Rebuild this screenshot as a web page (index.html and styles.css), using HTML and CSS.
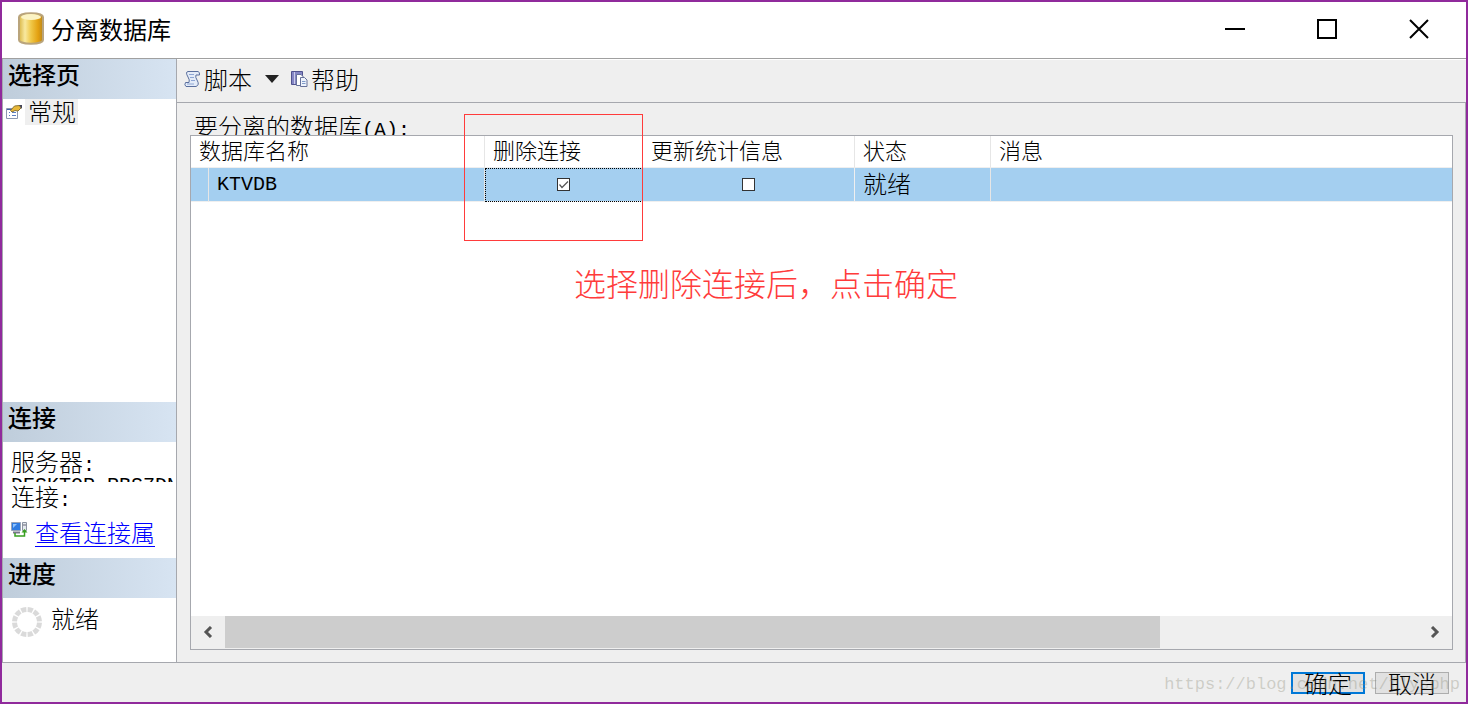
FILE: index.html
```html
<!DOCTYPE html>
<html lang="zh-CN">
<head>
<meta charset="utf-8">
<title>分离数据库</title>
<link rel="stylesheet" href="styles.css">
</head>
<body>
<div class="window">
  <header class="titlebar">
    <svg class="db-icon" width="28" height="34" viewBox="0 0 28 34" aria-hidden="true">
      <defs>
        <linearGradient id="gold" x1="0" x2="1"><stop offset="0" stop-color="#d9b544"/><stop offset=".25" stop-color="#f8e9a0"/><stop offset=".5" stop-color="#f0c848"/><stop offset=".8" stop-color="#e3a010"/><stop offset="1" stop-color="#b9861c"/></linearGradient>
      </defs>
      <path d="M2 5C2 0 26 0 26 5V28C26 33 2 33 2 28Z" fill="url(#gold)" stroke="#b9a47c" stroke-width="2"/>
      <ellipse cx="14" cy="5" rx="10" ry="3" fill="#fbf3c4"/>
    </svg>
    <h1 class="title">分离数据库</h1>
    <div class="controls">
      <button class="control" aria-label="最小化"><svg width="22" height="22" viewBox="0 0 22 22"><path d="M1 11H21" stroke="#000" stroke-width="2"/></svg></button>
      <button class="control" aria-label="最大化"><svg width="22" height="22" viewBox="0 0 22 22"><path d="M2 2H20V20H2Z" fill="none" stroke="#000" stroke-width="2"/></svg></button>
      <button class="control" aria-label="关闭"><svg width="22" height="22" viewBox="0 0 22 22"><path d="M2 2L20 20M20 2L2 20" stroke="#000" stroke-width="2"/></svg></button>
    </div>
  </header>

  <div class="body">
    <aside class="sidebar">
      <section class="pages">
        <h2 class="section-title">选择页</h2>
        <div class="page-item">
          <svg width="17" height="16" viewBox="0 0 17 16" aria-hidden="true">
            <path d="M.5 4.500H11.500V14.500H.5Z" fill="#fff" stroke="#8c98b0"/>
            <path d="M1 5.500H7" stroke="#3f62a8"/>
            <path d="M3 8.500H4M6 8.500H10M3 11.500H4M6 11.500H10" stroke="#5b7fc4"/>
            <path d="M4.500 6.500L8.500 2L13.500 1.500L15 4L12 7L9 6.500L6 8Z" fill="#e8b838" stroke="#8a7434"/>
            <path d="M13 1H16V5Z" fill="#445"/>
          </svg>
          <span class="page-name">常规</span>
        </div>
      </section>
      <section>
        <h2 class="section-title">连接</h2>
        <div class="connection">
          <div class="line">服务器<span class="latin">:</span></div>
          <div class="server latin">DESKTOP-RBS7DN</div>
          <div class="line">连接<span class="latin">:</span></div>
          <div class="view-link">
            <svg width="17" height="17" viewBox="0 0 17 17" aria-hidden="true">
              <path d="M.5 1.500H9.500V9.500H.5Z" fill="#2f7be0" stroke="#98a4b8"/>
              <path d="M2 3H6L2 7Z" fill="#8fc4ff"/>
              <path d="M2 11.500H9" stroke="#778" stroke-width="2"/>
              <path d="M11.500 1.500H15.500V9.500H11.500Z" fill="#e4e8ee" stroke="#8c94a2"/>
              <path d="M12 4H15" stroke="#667"/>
              <path d="M4 12V15H13.500V10" fill="none" stroke="#38a020" stroke-width="1.500"/>
              <path d="M10.500 11.500L13.500 8L16.500 11.500Z" fill="#38a020"/>
            </svg>
            <a class="link" href="#">查看连接属</a>
          </div>
        </div>
      </section>
      <section>
        <h2 class="section-title">进度</h2>
        <div class="progress">
          <svg width="32" height="32" viewBox="0 0 32 32" aria-hidden="true"><circle cx="16" cy="16" r="12.500" fill="none" stroke="#dadada" stroke-width="5" pathLength="120" stroke-dasharray="8 2" stroke-dashoffset="-1"/></svg>
          <span>就绪</span>
        </div>
      </section>
    </aside>

    <main class="main">
      <div class="toolbar">
        <button class="tool">
          <svg width="17" height="18" viewBox="0 0 17 18" aria-hidden="true">
            <path d="M4 1.500H14Q16 2 15.500 5H12Q11 7 13 10Q16 15 12 16.500H2Q0 15 1.500 12.500H5Q6 10 4 7Q1 2 4 1.500Z" fill="#e3ebf8" stroke="#5a6f9e"/>
            <path d="M5 4.500H10M6 7.500H10M7 10.500H11M3 14H10" stroke="#8ea6d4"/>
          </svg>
          <span>脚本</span>
          <svg class="caret" width="14" height="8" viewBox="0 0 14 8" aria-hidden="true"><path d="M0 0H14L7 8Z" fill="#222"/></svg>
        </button>
        <button class="tool">
          <svg width="17" height="18" viewBox="0 0 17 18" aria-hidden="true">
            <path d="M.5 1.500H11.500V14.500H.5Z" fill="#8486c4" stroke="#50528e"/>
            <path d="M3.500 2V14" stroke="#cccdea"/>
            <path d="M5.500 4.500H10L12.500 7V15.500H5.500Z" fill="#fff" stroke="#667199"/>
            <path d="M9.500 7.500H13.500L16 10V16.500H9.500Z" fill="#eef3fc" stroke="#667199"/>
            <path d="M11 11.500H14.500M11 13.500H14.500" stroke="#7f9ac8"/>
          </svg>
          <span>帮助</span>
        </button>
      </div>
      <div class="content">
        <div class="caption" id="caption">要分离的数据库<span class="latin">(A):</span></div>
        <div class="grid">
          <table class="table" aria-labelledby="caption">
            <colgroup><col class="c-mark"><col class="c-name"><col class="c-drop"><col class="c-update"><col class="c-state"><col></colgroup>
            <thead>
              <tr><th colspan="2">数据库名称</th><th class="joined">删除连接</th><th>更新统计信息</th><th>状态</th><th>消息</th></tr>
            </thead>
            <tbody>
              <tr><td></td><td class="latin name">KTVDB</td><td class="tick focused"><input class="check" type="checkbox" aria-label="删除连接" checked></td><td class="tick"><input class="check" type="checkbox" aria-label="更新统计信息"></td><td>就绪</td><td></td></tr>
            </tbody>
          </table>
          <div class="scrollbar">
            <button class="arrow" aria-label="向左滚动"><svg width="10" height="12" viewBox="0 0 10 12"><path d="M8 1L3 6L8 11" fill="none" stroke="#555" stroke-width="3"/></svg></button>
            <div class="track"><div class="thumb"></div></div>
            <button class="arrow" aria-label="向右滚动"><svg width="10" height="12" viewBox="0 0 10 12"><path d="M2 1L7 6L2 11" fill="none" stroke="#555" stroke-width="3"/></svg></button>
          </div>
          <div class="mark-box"></div>
          <p class="mark-text">选择删除连接后，点击确定</p>
        </div>
      </div>
    </main>
  </div>

  <footer class="footer">
    <button class="btn primary">确定</button>
    <button class="btn">取消</button>
    <span class="watermark">https://blog.csdn.net/flysphp</span>
  </footer>
</div>
</body>
</html>
```
FILE: styles.css
```css
* { box-sizing: border-box; }

body {
  margin: 0;
  font-family: "Noto Sans CJK SC", sans-serif;
  font-size: 24px;
  font-weight: 300;
  line-height: 28px;
  color: #000;
}

button {
  font: inherit;
  color: inherit;
  padding: 0;
  border: 0;
  background: none;
}

h1, h2, p { margin: 0; }

svg { display: block; flex: none; }

.latin {
  font-family: "Liberation Mono", monospace;
  font-size: 20px;
}

.window {
  display: flex;
  flex-direction: column;
  min-height: 100vh;
  border: 2px solid #902a9c;
  background: #efefef;
}

.titlebar {
  display: flex;
  align-items: center;
  height: 57px;
  padding: 0 1px 2px 15px;
  background: #fff;
  border-bottom: 1px solid #a0a0a0;
}

.title {
  flex: 1;
  margin-left: 6px;
  font-size: 24px;
  font-weight: 400;
}

.controls { display: flex; }

.control {
  display: flex;
  align-items: center;
  justify-content: center;
  width: 92px;
  height: 54px;
}

.body { display: flex; flex: 1; }

.sidebar {
  display: flex;
  flex-direction: column;
  flex: none;
  width: 175px;
  background: #fff;
  border-left: 1px solid #a6a8ae;
  border-right: 1px solid #a6a8ae;
}

.pages { flex: 1; }

.section-title {
  height: 40px;
  padding: 1px 5px;
  font-size: 24px;
  font-weight: 500;
  background: linear-gradient(90deg, #bfcddb, #d7e4f2);
}

.page-item {
  display: flex;
  align-items: center;
  gap: 2px;
  padding-left: 3px;
}

.page-name {
  height: 26px;
  padding: 0 2px 0 3px;
  line-height: 24px;
  background: #efefef;
}

.connection {
  height: 116px;
  padding: 5px 3px 0 8px;
}

.line { height: 28px; }

.server {
  height: 4px;
  margin-top: 3px;
  overflow: hidden;
  line-height: 16px;
  white-space: nowrap;
}

.view-link {
  display: flex;
  align-items: flex-start;
  gap: 7px;
  margin-top: 8px;
}

.view-link svg { margin-top: 3px; }

.link {
  color: #00f;
  text-decoration-thickness: 1px;
  text-underline-offset: 4px;
}

.progress {
  display: flex;
  align-items: flex-start;
  gap: 8px;
  height: 64px;
  padding: 6px 8px;
}

.progress svg { margin-top: 2px; }

.main {
  display: flex;
  flex-direction: column;
  flex: 1;
  min-width: 0;
  border-top: 1px solid #fff;
}

.toolbar {
  display: flex;
  align-items: center;
  gap: 12px;
  height: 43px;
  padding: 0 0 4px 7px;
  border-bottom: 1px solid #a6a8ae;
}

.tool {
  display: flex;
  align-items: center;
  gap: 3px;
}

.caret { margin-left: 10px; }

.content {
  display: flex;
  flex-direction: column;
  flex: 1;
  padding: 9px 12px 12px 13px;
  border-right: 1px solid #a6a8ae;
}

.caption {
  height: 23px;
  padding-left: 4px;
  overflow: hidden;
}

.grid {
  position: relative;
  display: flex;
  flex-direction: column;
  justify-content: space-between;
  flex: 1;
  background: #fff;
  border: 1px solid #a6a8ae;
}

.table {
  width: 100%;
  table-layout: fixed;
  border-collapse: separate;
  border-spacing: 0;
}

.c-mark { width: 18px; }
.c-name { width: 276px; }
.c-drop { width: 158px; }
.c-update { width: 212px; }
.c-state { width: 136px; }

th, td {
  padding: 0 8px;
  text-align: left;
  border-right: 1px solid #e6e6e6;
  border-bottom: 1px solid #efefef;
}

th {
  height: 32px;
  padding-bottom: 5px;
  font-size: 22px;
  font-weight: 300;
  line-height: 26px;
}

td {
  height: 34px;
  padding-bottom: 3px;
  background: #a4cff0;
}

td.name { padding-bottom: 0; }

th:last-child, td:last-child { border-right: 0; }

.joined { border-right-color: #fff; }

.tick {
  text-align: center;
  border-right-color: #a4cff0;
  line-height: 12px;
}

.tick:not(.focused) { border-right-color: #efefef; }

.focused { outline: 1px dotted #000; outline-offset: -1px; }

.check {
  appearance: none;
  width: 13px;
  height: 13px;
  margin: 0;
  vertical-align: middle;
  border: 1px solid #333;
  background: #fff;
}

.check:checked {
  background: #fff url("data:image/svg+xml,%3Csvg xmlns='http://www.w3.org/2000/svg' viewBox='0 0 11 11'%3E%3Cpath d='M1.500 5.500L4 8.500L10 2.500' fill='none' stroke='%23555' stroke-width='1.200'/%3E%3C/svg%3E");
}

.scrollbar {
  display: flex;
  height: 33px;
  padding-bottom: 1px;
  background: #efefef;
}

.arrow {
  display: flex;
  align-items: center;
  justify-content: center;
  width: 34px;
}

.track { flex: 1; }

.thumb {
  width: 78.400%;
  height: 100%;
  background: #cdcdcd;
}

.mark-box {
  position: absolute;
  top: -22px;
  left: 273px;
  width: 179px;
  height: 127px;
  border: 1px solid #ff3b3b;
}

.mark-text {
  position: absolute;
  top: 126px;
  left: 383px;
  font-size: 32px;
  line-height: 40px;
  color: #ff3b3b;
  white-space: nowrap;
}

.footer {
  position: relative;
  display: flex;
  justify-content: flex-end;
  gap: 10px;
  height: 40px;
  padding: 9px 17px 0 0;
  border-top: 1px solid #a6a8ae;
}

.btn {
  width: 74px;
  height: 22px;
  line-height: 20px;
  background: #e1e1e1;
  border: 1px solid #adadad;
}

.primary {
  line-height: 18px;
  border: 2px solid #0078d7;
}

.watermark {
  position: absolute;
  right: 6px;
  top: 8px;
  font-family: "Liberation Mono", monospace;
  font-size: 17px;
  color: rgba(140, 140, 120, 0.35);
  pointer-events: none;
}
```
